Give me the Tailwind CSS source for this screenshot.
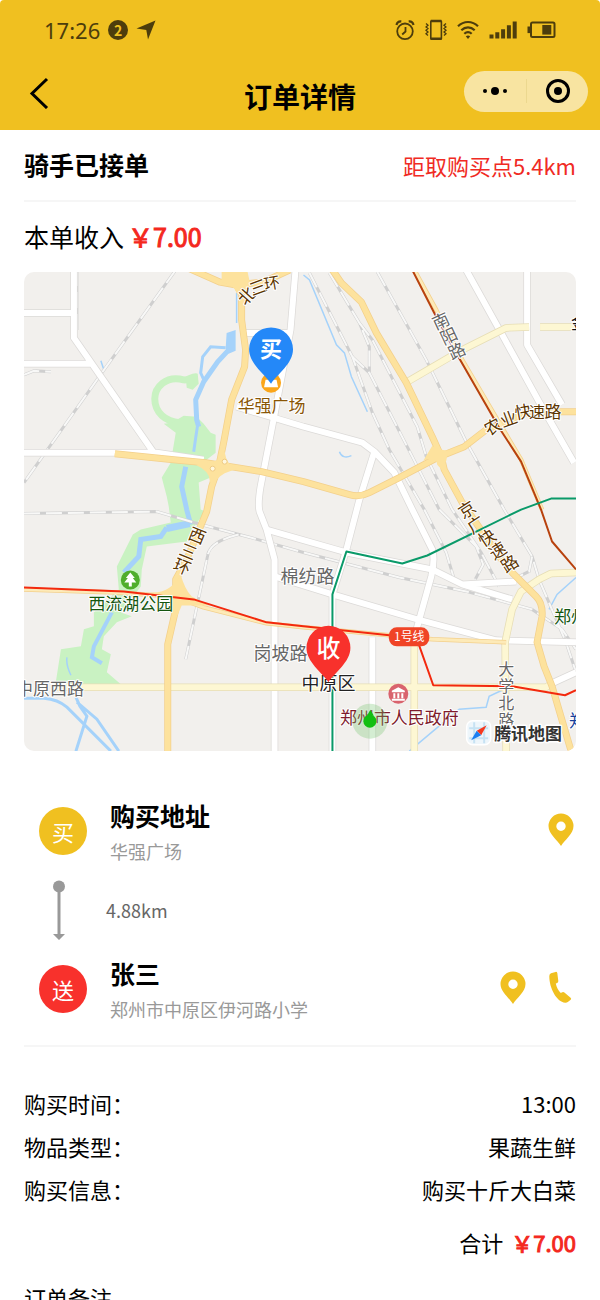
<!DOCTYPE html>
<html lang="zh-CN">
<head>
    <meta charset="UTF-8">
    <meta name="viewport" content="width=device-width, initial-scale=1.0">
    <title>订单详情</title>
    <script src="https://cdn.jsdelivr.net/npm/@tailwindcss/browser@4"></script>
</head>
<body class="font-['Noto_Sans_CJK_SC',sans-serif] bg-white text-black h-screen overflow-hidden flex flex-col">
    <header class="bg-[#f0c020] rounded-t-sm shrink-0 pb-2">
        <!-- Status bar -->
        <div class="h-[60px] px-11 flex items-center justify-between text-[#4d3d0c]">
            <div class="flex items-center gap-2">
                <span class="font-['Noto_Sans',sans-serif] text-[22px] leading-6">17:26</span>
                <span class="size-5 rounded-full bg-[#4d3d0c] text-[#f0c020] text-sm leading-5 font-bold text-center">2</span>
                <svg class="w-5 h-5" viewBox="0 0 20 20" fill="currentColor"><path d="M19.500 0.500 12 19.500 10.300 10 0.500 8.500z"/></svg>
            </div>
            <div class="flex items-center gap-2.5">
                <svg class="w-5 h-5" viewBox="0 0 20 20" fill="none" stroke="currentColor" stroke-width="1.800">
                    <circle cx="10" cy="11.300" r="7.800"/>
                    <path d="M10.500 7v4.500l-3.300 3"/>
                    <path d="M1.500 5A4.500 4.500 0 0 1 6.300 1.400M18.500 5A4.500 4.500 0 0 0 13.700 1.400" stroke-width="2.200"/>
                </svg>
                <svg class="w-[22px] h-[22px]" viewBox="0 0 22 22" fill="none" stroke="currentColor">
                    <rect x="5.800" y="1.800" width="10.600" height="18.400" rx="0.800" stroke-width="1.600"/>
                    <path d="M5.800 2h10.600M5.800 19.600h10.600" stroke-width="2.400"/>
                    <path d="M1 4.500l2 1.700-2 1.700 2 1.700-2 1.700 2 1.700-2 1.700 2 1.700M21 4.500l-2 1.700 2 1.700-2 1.700 2 1.700-2 1.700 2 1.700-2 1.700" stroke-width="1.300"/>
                </svg>
                <svg class="w-[22px] h-5" viewBox="0 0 22 20" fill="none" stroke="currentColor" stroke-width="2.200">
                    <path d="M1 6.200C6.800 0.600 15.200 0.600 21 6.200"/>
                    <path d="M4.300 10.200C8.300 6.400 13.700 6.400 17.700 10.200"/>
                    <path d="M7.300 13.800C9.500 11.700 12.500 11.700 14.700 13.800"/>
                    <path d="M8.800 16.200Q11 14.600 13.200 16.200L11 19z" fill="currentColor" stroke="none"/>
                </svg>
                <svg class="w-7 h-5" viewBox="0 0 28 20" fill="currentColor">
                    <path d="M0.500 14.500h4v4h-4zM6.300 12.300h4v6.200h-4zM12.100 9.200h4v9.300h-4zM17.900 5.300h4v13.200h-4zM23.700 1.500h4v17h-4z"/>
                </svg>
                <svg class="w-[29px] h-5" viewBox="0 0 29 20" fill="none" stroke="currentColor">
                    <rect x="4" y="2.500" width="23.500" height="14.600" rx="1.500" stroke-width="2"/>
                    <path d="M0.500 6.500h3v6.600h-3z" fill="currentColor" stroke="none"/>
                    <path d="M15.300 5h9v9.600h-9z" fill="currentColor" stroke="none"/>
                </svg>
            </div>
        </div>
        <!-- Title bar -->
        <nav class="h-[62px] px-3 grid grid-cols-[1fr_auto_1fr] items-center">
            <button class="justify-self-start ml-3 w-8 h-9 pt-1" aria-label="返回">
                <svg class="w-8 h-8" viewBox="0 0 32 32" fill="none" stroke="#000" stroke-width="3"><path d="M23 2 8 16.500 23 31"/></svg>
            </button>
            <h1 class="text-[28px] leading-8 font-bold pt-2.5">订单详情</h1>
            <div class="justify-self-end w-[124px] h-[41px] rounded-full bg-[#f8e4a1] grid grid-cols-2 items-center">
                <button class="h-6 flex items-center justify-center gap-1" aria-label="更多">
                    <span class="size-1 rounded-full bg-black"></span>
                    <span class="size-2 rounded-full bg-black"></span>
                    <span class="size-1 rounded-full bg-black"></span>
                </button>
                <button class="h-6 flex items-center justify-center border-l border-[#ecd88f]" aria-label="关闭">
                    <span class="size-6 rounded-full border-3 border-black flex items-center justify-center">
                        <span class="size-2 rounded-full bg-black"></span>
                    </span>
                </button>
            </div>
        </nav>
    </header>

    <main class="px-6 flex-1 overflow-y-auto [scrollbar-width:none]">
        <div class="h-[72px] flex items-center justify-between border-b-2 border-[#f6f6f6]">
            <h2 class="text-[25px] font-bold">骑手已接单</h2>
            <p class="text-[22px] text-[#f02b24]">距取购买点5.4km</p>
        </div>
        <div class="h-[70px] flex items-center gap-1 text-[25px]">
            <span>本单收入</span>
            <strong class="font-normal [-webkit-text-stroke:1px] text-[#f4281e]">￥7.00</strong>
        </div>

        <!-- Map -->
        <svg class="block w-full rounded-[10px]" viewBox="24 272 553 480" font-size="17" text-anchor="middle">
            <rect x="24" y="272" width="553" height="480" fill="#f2f0ed"/>
            <!-- parks -->
            <path d="M197 377C192 376 190 381 184 380C166 375 155 388 155 399C155 413 166 422 180 423" fill="none" stroke="#c9f2c2" stroke-width="7"/>
            <path d="M186 377l12-3 1 10-6 6-6-2z" fill="#c9f2c2"/>
            <path d="M164 424 172 423 184 416 197 417 204 424 211 433 216 435 216 453 207 460 211 478 199 483 201 510 206 512 192 530 187 542 147 547 142 570 141 587 121 613 132 617 117 623 104 637 102 650 111 655 107 673 121 685 67 685 56 682 61 650 81 647 84 630 94 627 94 613 119 590 117 567 124 553 133 535 141 530 171 523 169 507 167 497 162 478 171 463 176 433z" fill="#c9f2c2"/>
            <!-- water -->
            <g fill="none" stroke="#a5d2fa">
                <path d="M227 333 236 330 236 351 229 354 226 349z" fill="#a5d2fa" stroke="none"/>
                <path d="M230 349 218 362 204 382 196 400 197 420 199 427" stroke-width="5"/>
                <path d="M198 425 196 438 194 452M226 348 211 347 203 357 201 373 205 382" stroke-width="3"/>
                <path d="M186 467 182 487 187 510 191 525M167 528 161 537 141 540 139 557 124 573" stroke-width="5"/>
                <path d="M190 524 167 529" stroke-width="7"/>
                <path d="M112 613 94 647 92 658 102 664" stroke-width="4"/>
                <path d="M24 699H44Q58 700 67 708L111 752M76 698 80 707 87 717 76 752M77 703 97 720 119 752" stroke-width="3"/>
                <path d="M237 293V323M304 275 310 280 337 345 345 353 352 377 368 412M410 752 435 731 460 710 487 708 490 697 505 690M550 610 558 595 577 578M340 452q3 8 12 4M67 658q-1 8 4 18M101 361l3 9" stroke-width="1.500"/>
            </g>
            <!-- railways -->
            <g fill="none" stroke="#cfcfcf" stroke-width="3">
                <path d="M176 270 102 373 24 483M24 375 34 371 51 372M77 270V330M24 514 157 512 201 525 251 538 304 553 400 578 467 592 533 610 563 630 577 650"/>
                <path d="M239 535Q210 542 208 556L186 660M310 273 353 357 373 413 390 450 425 510 447 553 455 580"/>
                <path d="M330 273 360 323 370 347 370 373 413 457 440 510 477 547 484 565 476 580M360 323 373 340 418 427 427 457 453 510 482 553 500 587M353 357 370 373"/>
                <path d="M378 272 427 360 467 442 505 510 533 557 540 580 567 643 577 673M533 557 530 572 520 577"/>
            </g>
            <g fill="none" stroke="#f8f8f7" stroke-width="2" stroke-dasharray="16 6">
                <path d="M176 270 102 373 24 483M24 375 34 371 51 372M77 270V330M24 514 157 512 201 525 251 538 304 553 400 578 467 592 533 610 563 630 577 650"/>
                <path d="M239 535Q210 542 208 556L186 660M310 273 353 357 373 413 390 450 425 510 447 553 455 580"/>
                <path d="M330 273 360 323 370 347 370 373 413 457 440 510 477 547 484 565 476 580M360 323 373 340 418 427 427 457 453 510 482 553 500 587M353 357 370 373"/>
                <path d="M378 272 427 360 467 442 505 510 533 557 540 580 567 643 577 673M533 557 530 572 520 577"/>
            </g>
            <!-- minor roads -->
            <g fill="none" stroke="#dcdad8" stroke-width="7.500" stroke-linejoin="round">
                <path d="M24 313H74M24 364H91M74 270V338L154 453M24 453H157L204 460"/>
                <path d="M296 270 291 330 274 420 261 487Q258 505 260 512L267 530 275 560V752M246 333H290"/>
                <path d="M237 407 274 418 304 427 363 443 375 452 395 473 413 510 433 550Q436 560 432 577L415 638M375 452 360 500 347 550 333 595V752"/>
                <path d="M267 530 347 553 433 570 463 585 517 582M463 585 513 600M275 577 333 595 418 620 497 641 577 643M373 638V752M467 270 502 333 540 402 575 463M528 270V345L563 405M553 684 577 673"/>
            </g>
            <g fill="none" stroke="#fff" stroke-width="6" stroke-linejoin="round">
                <path d="M24 313H74M24 364H91M74 270V338L154 453M24 453H157L204 460"/>
                <path d="M296 270 291 330 274 420 261 487Q258 505 260 512L267 530 275 560V752M246 333H290"/>
                <path d="M237 407 274 418 304 427 363 443 375 452 395 473 413 510 433 550Q436 560 432 577L415 638M375 452 360 500 347 550 333 595V752"/>
                <path d="M267 530 347 553 433 570 463 585 517 582M463 585 513 600M275 577 333 595 418 620 497 641 577 643M373 638V752M467 270 502 333 540 402 575 463M528 270V345L563 405M553 684 577 673"/>
            </g>
            <!-- pale yellow roads -->
            <g fill="none" stroke-linejoin="round">
                <g stroke="#e6ddb5" stroke-width="7.500">
                    <path d="M56 688H547L553 684M415 638V752M507 752 506 643 513 610 522 592 540 580 552 574 577 573M408 382 463 350 507 328 530 327M541 327H577"/>
                </g>
                <g stroke="#fdf7d3" stroke-width="6">
                    <path d="M56 688H547L553 684M415 638V752M507 752 506 643 513 610 522 592 540 580 552 574 577 573M408 382 463 350 507 328 530 327M541 327H577"/>
                </g>
            </g>
            <!-- main roads -->
            <g fill="none" stroke-linejoin="round">
                <g stroke="#f3d08c" stroke-width="7">
                    <path d="M115 454 174 460 206 463 262 472 304 482 350 495Q360 498 370 493L400 478 440 457 465 447 487 430 530 412H577"/>
                    <path d="M186 267 220 282 237 285 264 282 290 270M234 270 237 285 242 295V320L246 350 245 367 232 400 224 443 219 467 212 487 207 512 187 560 176 580V610L168 645V752"/>
                    <path d="M333 270 342 283 362 302 377 333 407 383 433 437 442 457 445 470 463 503 500 557 513 573 537 597Q544 604 543 617L538 643 545 667 553 687 573 755"/>
                    <path d="M415 270 437 310 463 360 500 423 522 460 543 510M24 590 117 593 174 597 204 608 267 624 304 628 390 636 433 640 507 643" stroke-width="4.500"/>
                </g>
                <g stroke="#fde29d" stroke-width="5.500">
                    <path d="M115 454 174 460 206 463 262 472 304 482 350 495Q360 498 370 493L400 478 440 457 465 447 487 430 530 412H577"/>
                    <path d="M186 267 220 282 237 285 264 282 290 270M234 270 237 285 242 295V320L246 350 245 367 232 400 224 443 219 467 212 487 207 512 187 560 176 580V610L168 645V752"/>
                    <path d="M333 270 342 283 362 302 377 333 407 383 433 437 442 457 445 470 463 503 500 557 513 573 537 597Q544 604 543 617L538 643 545 667 553 687 573 755"/>
                    <path d="M415 270 437 310 463 360 500 423 522 460 543 510M24 590 117 593 174 597 204 608 267 624 304 628 390 636 433 640 507 643" stroke="#fdeab8" stroke-width="3"/>
                </g>
                <path d="M222 272h26l2 9-5 13h-7q-4-10-16-12zM225 452q2 14 12 17l-8 3q-8 2-15 12l-4-2q1-10-14-17l11-2q12 0 18-11zM181 575q4 15 11 22l18 9-28 0-5 12-4 0q-2-18-22-25 20 1 30-18zM433 446q5 4 16 5l-2 10q-4 6-1 13l-8-9q-1-9-14-4z" fill="#fde29d"/>
                <circle cx="213" cy="469" r="2.500" fill="#fff7de" stroke="#eecb85"/>
                <circle cx="225" cy="462" r="2.500" fill="#fff7de" stroke="#eecb85"/>
            </g>
            <!-- subway lines -->
            <g fill="none" stroke-width="2" stroke-linejoin="round">
                <path d="M413 270 435 313 458 355 500 428 522 462 542 510 553 542 577 570" stroke="#b8420e"/>
                <path d="M577 499H552L522 510 477 532 428 556 403 564 347 552 333 595V752" stroke="#0a9a69"/>
                <path d="M24 588 124 592 194 600 267 623 304 627 390 636 417 638 434 686 513 687 566 696 577 691" stroke="#f3290e"/>
            </g>

            <!-- road labels -->
            <g stroke="#fff" stroke-width="2" stroke-linejoin="round" paint-order="stroke" dominant-baseline="central">
                <g fill="#5c3500">
                    <text transform="translate(246 295) rotate(-48)">北</text>
                    <text transform="translate(258 286) rotate(-20)">三</text>
                    <text transform="translate(272 282) rotate(-10)" font-size="16">环</text>
                    <text transform="translate(198 535) rotate(22)">西</text>
                    <text transform="translate(189 551) rotate(22)">三</text>
                    <text transform="translate(183 566) rotate(22)">环</text>
                    <text transform="translate(493 426) rotate(-28)">农</text>
                    <text transform="translate(509 418) rotate(-20)">业</text>
                    <text transform="translate(524 411) rotate(-10)">快</text>
                    <text transform="translate(538 411)" font-size="16">速</text>
                    <text transform="translate(554 411)">路</text>
                    <text transform="translate(467 509) rotate(-33)">京</text>
                    <text transform="translate(476 524) rotate(-33)">广</text>
                    <text transform="translate(487 537) rotate(-33)">快</text>
                    <text transform="translate(498 550) rotate(-33)">速</text>
                    <text transform="translate(510 563) rotate(-33)">路</text>
                </g>
                <g fill="#666">
                    <text transform="translate(441 320) rotate(-25)">南</text>
                    <text transform="translate(449 335) rotate(-25)">阳</text>
                    <text transform="translate(457 350) rotate(-25)">路</text>
                    <text x="507" y="669" font-size="16">大</text>
                    <text x="507" y="686" font-size="16">学</text>
                    <text x="507" y="703" font-size="16">北</text>
                    <text x="507" y="720" font-size="16">路</text>
                    <text x="308" y="576" font-size="18">棉纺路</text>
                    <text x="281" y="653" font-size="18">岗坡路</text>
                    <text x="50" y="688">中原西路</text>
                </g>
                <text x="272" y="405" fill="#8a5606">华强广场</text>
                <text x="131" y="603" fill="#14560f">西流湖公园</text>
                <text x="329" y="683" font-size="18" fill="#222">中原区</text>
                <text x="400" y="717" fill="#7e1b2c">郑州市人民政府</text>
                <text x="555" y="616" fill="#14560f" text-anchor="start">郑州</text>
                <text x="572" y="322" fill="#111" text-anchor="start">金</text>
                <text x="570" y="720" fill="#15409a" text-anchor="start">郑</text>
                <text x="529" y="733" fill="#333" stroke-width="3" font-weight="700">腾讯地图</text>
            </g>

            <!-- places -->
            <circle cx="130.500" cy="580.500" r="9.500" fill="#4fae2c"/>
            <path d="M130.500 573l4.500 5.500h-2l3.500 4.500h-4.500v4h-3v-4h-4.500l3.500-4.500h-2z" fill="#fff"/>
            <circle cx="399" cy="694.500" r="10" fill="#d9636e"/>
            <path d="M392.500 691.500 399 688l6.500 3.500v1.500h-13zM394 694h2v5h-2zM398 694h2v5h-2zM402 694h2v5h-2zM392.500 699.500h13v2h-13z" fill="#fff"/>
            <rect x="389.500" y="628" width="40.500" height="19" rx="8" fill="#f04426"/>
            <text x="410" y="642" font-size="12" fill="#fff">1号线</text>
            <circle cx="271.500" cy="383" r="10" fill="#fba61a"/>
            <path d="M266 380h11l1.500 7.500h-14z" fill="#fff"/>

            <!-- current position -->
            <circle cx="370.500" cy="722" r="17.500" fill="#6fc46b" fill-opacity="0.300"/>
            <path d="M371 710.500l3.500 6h-7z" fill="#12bf12"/>
            <circle cx="370.500" cy="722" r="6.500" fill="#12bf12"/>

            <!-- markers -->
            <path d="M271.500 384C265 374 249.500 364 249.500 349.500a22 22 0 0 1 44 0C293.500 364 278 374 271.500 384z" fill="#2488f8"/>
            <text x="271.500" y="357" font-size="22" font-weight="700" fill="#fff">买</text>
            <path d="M329 683C322.500 673 307 663 307 648.500a22 22 0 0 1 44 0C351 663 335.500 673 329 683z" fill="#f8312c"/>
            <text x="329" y="658" font-size="24" font-weight="500" fill="#fff">收</text>

            <!-- map provider -->
            <rect x="467.500" y="721.500" width="24" height="24" rx="6" fill="#eef6fb" stroke="#fff" stroke-width="1.500"/>
            <path d="M470 729h19M470 739h19M475 723v21M485 723v21" stroke="#c6e2f3" stroke-width="2"/>
            <path d="M487.500 726 477.500 731.500 482 736z" fill="#f5391f"/>
            <path d="M472 741 477.500 731.500 482 736z" fill="#1b7ff2"/>
        </svg>

        <!-- Addresses -->
        <section class="pt-[46px] pb-[18px] border-b-2 border-[#f6f6f6]">
            <div class="flex items-start pl-[15px] pr-0.5">
                <span class="size-12 mt-2.5 mr-[23px] rounded-full bg-[#f0c020] text-white text-[22px] leading-12 text-center">买</span>
                <div class="flex-1">
                    <h3 class="text-[25px] leading-9 font-bold">购买地址</h3>
                    <p class="text-lg leading-9 text-[#999]">华强广场</p>
                </div>
                <button class="mt-4" aria-label="查看购买地址">
                    <svg class="w-[26px] h-[34px]" viewBox="0 0 26 34" fill="#f0c020" fill-rule="evenodd"><path d="M13 33C9.500 27 0.500 21 0.500 13a12.500 12.500 0 0 1 25 0C25.500 21 16.500 27 13 33zM13 8.500a4.700 4.700 0 1 0 0 9.400 4.700 4.700 0 0 0 0-9.400z"/></svg>
                </button>
            </div>
            <div class="h-[86px] pl-7 pb-1 flex items-center gap-10">
                <svg class="w-3.5 h-[60px]" viewBox="0 0 14 60" fill="#999"><circle cx="7" cy="6.500" r="6"/><path d="M5.500 6h3v48h4.500l-6 6-6-6h4.500z"/></svg>
                <span class="text-lg text-[#666]">4.88km</span>
            </div>
            <div class="flex items-start pl-[15px] pr-0.5">
                <span class="size-12 mt-2.5 mr-[23px] rounded-full bg-[#f8312c] text-white text-[22px] leading-12 text-center">送</span>
                <div class="flex-1">
                    <h3 class="text-[25px] leading-9 font-bold">张三</h3>
                    <p class="text-lg leading-9 text-[#999]">郑州市中原区伊河路小学</p>
                </div>
                <div class="mt-4 flex gap-[22px]">
                    <button aria-label="查看收货地址">
                        <svg class="w-[26px] h-[34px]" viewBox="0 0 26 34" fill="#f0c020" fill-rule="evenodd"><path d="M13 33C9.500 27 0.500 21 0.500 13a12.500 12.500 0 0 1 25 0C25.500 21 16.500 27 13 33zM13 8.500a4.700 4.700 0 1 0 0 9.400 4.700 4.700 0 0 0 0-9.400z"/></svg>
                    </button>
                    <a href="tel:" aria-label="拨打电话">
                        <svg class="w-[26px] h-[34px]" viewBox="0 0 26 34" fill="#f0c020"><path d="M3 2.200 7.500 0.900Q9 0.600 9.300 2L10.300 10Q10.400 11.300 9.300 11.900L7.800 12.600C8.600 16.500 10.200 19.500 12.800 22L14.200 21.300Q15.400 20.600 16.400 21.500L22.600 26.700Q23.700 27.700 22.700 28.700L19.800 31Q18.900 31.800 17.200 31.700C8.500 31 1.200 17 1.300 5Q1.400 2.800 3 2.200z"/></svg>
                    </a>
                </div>
            </div>
        </section>

        <!-- Order info -->
        <dl class="mt-[35px] text-[22px]">
            <div class="h-[43px] flex items-center justify-between"><dt>购买时间：</dt><dd>13:00</dd></div>
            <div class="h-[43px] flex items-center justify-between"><dt>物品类型：</dt><dd>果蔬生鲜</dd></div>
            <div class="h-[43px] flex items-center justify-between"><dt>购买信息：</dt><dd>购买十斤大白菜</dd></div>
            <div class="h-[62px] flex items-center justify-end gap-2"><dt>合计</dt><dd class="[-webkit-text-stroke:1px] text-[#f4281e]">￥7.00</dd></div>
        </dl>
        <h3 class="h-12 flex items-center text-[22px]">订单备注</h3>
    </main>
</body>
</html>
